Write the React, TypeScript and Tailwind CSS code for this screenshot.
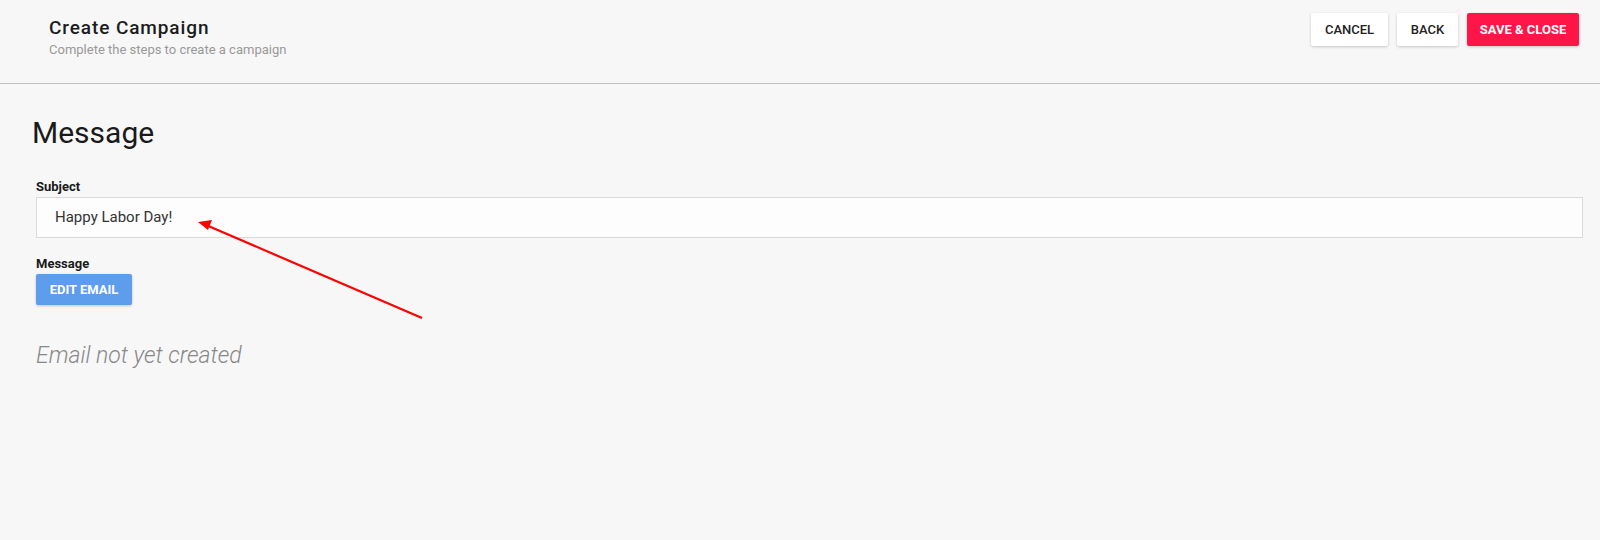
export default function App() {
  return (
    <div className="relative min-h-[540px] w-full bg-[#f7f7f7] font-['Roboto',sans-serif] text-[#1a1a1a]">
      <header className="flex h-[84px] items-start justify-between border-b border-[#c2c2c2] pl-[49px] pr-[21px]">
        <div className="pt-[15px]">
          <h1 className="text-[19px] leading-[25px] font-medium tracking-[0.9px] text-[#1c1c1c]">Create Campaign</h1>
          <p className="mt-[1px] text-[13px] leading-[18px] text-[#999999]">Complete the steps to create a campaign</p>
        </div>
        <div className="flex gap-[9px] pt-[13px]">
          <button className="h-[33px] w-[77px] rounded-[2px] bg-white text-[13px] font-medium text-[#222] shadow-[0_1px_3px_rgba(0,0,0,0.2)]">
            CANCEL
          </button>
          <button className="h-[33px] w-[61px] rounded-[2px] bg-white text-[13px] font-medium text-[#222] shadow-[0_1px_3px_rgba(0,0,0,0.2)]">
            BACK
          </button>
          <button className="h-[33px] w-[112px] rounded-[2px] bg-[#ff1547] text-[13px] font-bold text-white shadow-[0_1px_3px_rgba(0,0,0,0.2)]">
            SAVE &amp; CLOSE
          </button>
        </div>
      </header>

      <main className="flex flex-col pl-[36px] pr-[17px]">
        <h2 className="-ml-[4px] mt-[31px] text-[30px] leading-[36px] font-normal text-[#1a1a1a]">Message</h2>
        <label className="mt-[28px] text-[13px] leading-[16px] font-bold text-[#1a1a1a]">Subject</label>
        <div className="mt-[2px] flex h-[41px] items-center border border-[#dadada] bg-[#fdfdfd] pl-[18px] text-[15px] text-[#333]">
          Happy Labor Day!
        </div>
        <label className="mt-[18px] text-[13px] leading-[16px] font-bold text-[#1a1a1a]">Message</label>
        <div className="mt-[2px]">
          <button className="h-[31px] w-[96px] rounded-[2px] bg-[#5e9cec] text-[13px] font-bold text-white shadow-[0_1px_3px_rgba(0,0,0,0.2)]">
            EDIT EMAIL
          </button>
        </div>
        <p className="mt-[37px] text-[23px] leading-[28px] font-light italic text-[#888888]">Email not yet created</p>
      </main>

      <svg className="pointer-events-none absolute left-0 top-0" width="1600" height="540">
        <line x1="422" y1="318" x2="206" y2="225" stroke="#ff0000" strokeWidth="2.2" />
        <polygon points="198,222 212,220 208,230" fill="#ff0000" />
      </svg>
    </div>
  );
}
